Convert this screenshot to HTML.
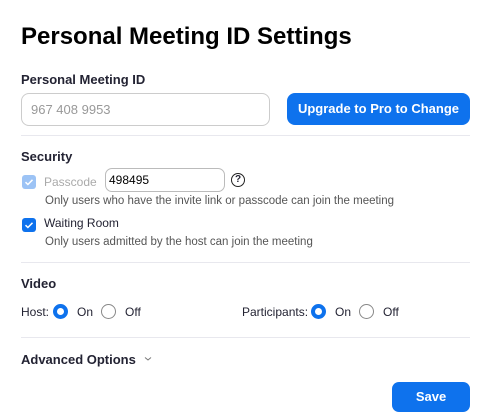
<!DOCTYPE html>
<html><head><style>
body{margin:0;width:490px;height:415px;background:#fff;font-family:"Liberation Sans",sans-serif;color:#232333;position:relative;overflow:hidden}
.a{position:absolute;white-space:nowrap}
.h{font-weight:bold;font-size:13px}
.s{font-size:11.5px;color:#555}
.line{position:absolute;left:21px;width:449px;height:1px;background:#e8e8ee}
.cb{position:absolute;width:14px;height:14px;border-radius:3px;background:#0e72ed}
.rad{position:absolute;width:7px;height:7px;border-radius:50%;border:4px solid #0e72ed;background:#fff}
.ro{position:absolute;width:15px;height:15px;border-radius:50%;border:1.3px solid #888;box-sizing:border-box}
.t{font-size:12px}
</style></head><body>
<div class="a" style="left:21px;top:23px;font-size:24px;font-weight:bold;color:#000">Personal Meeting ID Settings</div>
<div class="a h" style="left:21px;top:72px">Personal Meeting ID</div>
<div class="a" style="left:21px;top:93px;width:247px;height:31px;border:1px solid #ccc;border-radius:8px;font-size:13px;color:#999;line-height:31px;text-indent:9px">967 408 9953</div>
<div class="a" style="left:287px;top:93px;width:183px;height:32px;background:#0e72ed;border-radius:8px;color:#fff;font-weight:bold;font-size:13px;line-height:32px;text-align:center">Upgrade to Pro to Change</div>
<div class="line" style="top:135px"></div>
<div class="a h" style="left:21px;top:149px">Security</div>
<div class="cb" style="left:22px;top:175px;background:#9cc3f5"><svg width="14" height="14"><path d="M3.5 7.2l2.4 2.3 4.6-4.7" stroke="#fff" stroke-width="1.5" fill="none"/></svg></div>
<div class="a t" style="left:44px;top:175px;color:#aaa">Passcode</div>
<div class="a t" style="left:105px;top:168px;width:118px;height:22px;border:1px solid #bbb;border-radius:7px;line-height:22px;text-indent:3px;color:#000">498495</div>
<div class="a" style="left:231px;top:173px;width:12px;height:12px;border:1.3px solid #222;border-radius:50%;font-size:10px;line-height:12px;text-align:center;font-weight:bold">?</div>
<div class="a s" style="left:45px;top:195px">Only users who have the invite link or passcode can join the meeting</div>
<div class="cb" style="left:22px;top:218px"><svg width="14" height="14"><path d="M3.5 7.2l2.4 2.3 4.6-4.7" stroke="#fff" stroke-width="1.5" fill="none"/></svg></div>
<div class="a t" style="left:44px;top:216px">Waiting Room</div>
<div class="a s" style="left:45px;top:236px">Only users admitted by the host can join the meeting</div>
<div class="line" style="top:262px"></div>
<div class="a h" style="left:21px;top:276px">Video</div>
<div class="a t" style="left:21px;top:305px">Host:</div>
<div class="rad" style="left:53px;top:304px"></div>
<div class="a t" style="left:77px;top:305px">On</div>
<div class="ro" style="left:101px;top:304px"></div>
<div class="a t" style="left:125px;top:305px">Off</div>
<div class="a t" style="left:242px;top:305px">Participants:</div>
<div class="rad" style="left:311px;top:304px"></div>
<div class="a t" style="left:335px;top:305px">On</div>
<div class="ro" style="left:359px;top:304px"></div>
<div class="a t" style="left:383px;top:305px">Off</div>
<div class="line" style="top:337px"></div>
<div class="a h" style="left:21px;top:352px">Advanced Options</div>
<svg class="a" style="left:144px;top:356px" width="8" height="6"><path d="M1 1.5l3 2.5 3-2.5" stroke="#777" fill="none"/></svg>
<div class="a" style="left:392px;top:382px;width:78px;height:30px;background:#0e72ed;border-radius:7px;color:#fff;font-weight:bold;font-size:13px;line-height:30px;text-align:center">Save</div>
</body></html>
